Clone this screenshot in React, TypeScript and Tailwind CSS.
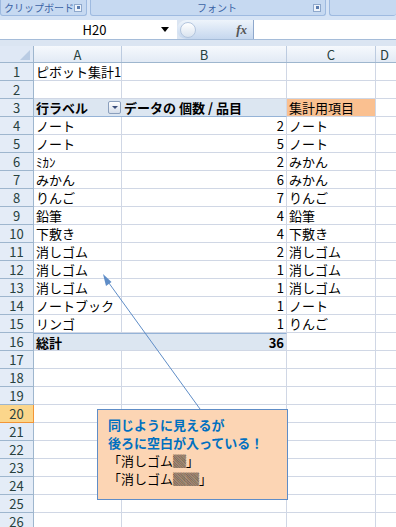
import React from "react";

type Row = {
  n: number;
  a?: string;
  b?: string;
  c?: string;
  kind?: "header" | "total";
};

const rows: Row[] = [
  { n: 1, a: "ピボット集計1" },
  { n: 2 },
  { n: 3, a: "行ラベル", b: "データの 個数 / 品目", c: "集計用項目", kind: "header" },
  { n: 4, a: "ノート", b: "2", c: "ノート" },
  { n: 5, a: "ノート", b: "5", c: "ノート" },
  { n: 6, a: "ﾐｶﾝ", b: "2", c: "みかん" },
  { n: 7, a: "みかん", b: "6", c: "みかん" },
  { n: 8, a: "りんご", b: "7", c: "りんご" },
  { n: 9, a: "鉛筆", b: "4", c: "鉛筆" },
  { n: 10, a: "下敷き", b: "4", c: "下敷き" },
  { n: 11, a: "消しゴム", b: "2", c: "消しゴム" },
  { n: 12, a: "消しゴム", b: "1", c: "消しゴム" },
  { n: 13, a: "消しゴム", b: "1", c: "消しゴム" },
  { n: 14, a: "ノートブック", b: "1", c: "ノート" },
  { n: 15, a: "リンゴ", b: "1", c: "りんご" },
  { n: 16, a: "総計", b: "36", kind: "total" },
  { n: 17 },
  { n: 18 },
  { n: 19 },
  { n: 20 },
  { n: 21 },
  { n: 22 },
  { n: 23 },
  { n: 24 },
  { n: 25 },
  { n: 26 },
];

const font = { fontFamily: "'Noto Sans CJK JP', 'Liberation Sans', sans-serif" };

function Launcher() {
  return (
    <span className="ml-auto mr-[4px] flex h-[8px] w-[8px] shrink-0 items-center justify-center border border-[#8ea8cc] bg-[#eef3fa]">
      <span className="h-[3px] w-[3px] bg-[#5b7cae]" />
    </span>
  );
}

function Ribbon() {
  return (
    <div className="flex h-[20px] bg-[#d5e3f5]">
      <div className="flex h-[16px] w-[87px] items-center whitespace-nowrap rounded-b-[3px] border border-t-0 border-[#9ebae0] bg-[#c6d9f1] pl-[3px] text-[10px] leading-none text-[#3b63a5]">
        クリップボード
        <Launcher />
      </div>
      <div className="ml-[3px] flex h-[16px] w-[236px] items-center whitespace-nowrap rounded-b-[3px] border border-t-0 border-[#9ebae0] bg-[#c6d9f1] text-[10px] leading-none text-[#3b63a5]">
        <span className="ml-[106px]">フォント</span>
        <Launcher />
      </div>
      <div className="ml-[3px] h-[16px] flex-1 rounded-b-[3px] border border-t-0 border-r-0 border-[#9ebae0] bg-[#c6d9f1]" />
    </div>
  );
}

function FormulaBar() {
  return (
    <div className="flex h-[26px] flex-col bg-[#dbe5f2]">
      <div className="flex h-[20px] border-b border-[#a5bcd9]">
        <div className="flex w-[177px] items-center bg-white">
          <span className="flex-1 pl-[28px] text-center text-[13px] leading-none text-black">H20</span>
          <span className="mr-[8px] h-0 w-0 border-x-[4px] border-t-[5px] border-x-transparent border-t-black" />
        </div>
        <div className="relative flex w-[77px] items-center rounded-l-[10px] border-r border-[#8ea8cc] bg-gradient-to-b from-[#eef4fb] to-[#c5d7ee]">
          <span className="ml-[3px] h-[16px] w-[16px] rounded-full border border-[#b4c6de] bg-gradient-to-b from-white to-[#d9e3ef]" />
          <span className="ml-auto mr-[6px] text-[13px] font-bold italic leading-none text-[#555]" style={{ fontFamily: "'Liberation Serif', serif" }}>
            fx
          </span>
        </div>
        <div className="flex-1 bg-white" />
      </div>
    </div>
  );
}

function ColumnHeader() {
  const cols = [
    { w: "w-[88px]", t: "A" },
    { w: "w-[165px]", t: "B" },
    { w: "w-[89px]", t: "C" },
  ];
  return (
    <div className="flex h-[17px] border-b border-[#9eb6ce] bg-gradient-to-b from-[#f6f9fd] to-[#e2eaf5] text-[13px] leading-none text-[#27413e]">
      <div className="relative w-[34px] border-r border-[#9eb6ce] bg-[#dfe8f5]">
        <span className="absolute bottom-[2px] right-[3px] h-0 w-0 border-b-[10px] border-l-[10px] border-b-[#b9cbe3] border-l-transparent" />
      </div>
      {cols.map((c) => (
        <div key={c.t} className={`${c.w} flex items-center justify-center border-r border-[#bccbe0]`}>
          {c.t}
        </div>
      ))}
      <div className="flex flex-1 items-center pl-[4px]">D</div>
    </div>
  );
}

function DataRow({ row }: { row: Row }) {
  const isHeader = row.kind === "header";
  const isTotal = row.kind === "total";
  const band = isHeader || isTotal ? "bg-[#dce6f1] font-bold" : "bg-white";
  const active = row.n === 20;
  const bottom = isHeader ? "border-b-[#95b3d7]" : "border-b-[#d0d7e5]";
  const top = isTotal ? "border-t border-t-[#95b3d7]" : "";

  return (
    <div className="flex h-[18px] text-[13px] leading-none text-black">
      <div
        className={`flex w-[34px] items-center justify-center border-r border-b text-[#27413e] ${
          active ? "border-[#f29536] bg-[#fbd68b]" : "border-[#9eb6ce] bg-[#e4ecf7]"
        }`}
      >
        {row.n}
      </div>
      <div className={`flex w-[88px] items-center border-b ${bottom} ${top} ${band} ${isHeader || isTotal ? "" : "border-r border-r-[#d0d7e5]"} pl-[2px] whitespace-nowrap`}>
        {row.a}
        {isHeader && (
          <span className="ml-auto mr-[1px] flex h-[13px] w-[13px] items-center justify-center rounded-[2px] border border-[#8a9fbd] bg-gradient-to-b from-white to-[#d5deeb]">
            <span className="h-0 w-0 border-x-[3px] border-t-[3px] border-x-transparent border-t-[#3b4f7a]" />
          </span>
        )}
      </div>
      <div
        className={`flex w-[165px] items-center border-b border-r border-r-[#d0d7e5] ${bottom} ${top} ${band} ${
          isHeader ? "justify-start pl-[2px]" : "justify-end pr-[2px]"
        } whitespace-nowrap`}
      >
        {row.b}
      </div>
      <div
        className={`flex w-[89px] items-center border-b border-r border-[#d0d7e5] pl-[2px] whitespace-nowrap ${
          isHeader ? "bg-[#fac090]" : "bg-white"
        }`}
      >
        {row.c}
      </div>
      <div className="flex-1 border-b border-[#d0d7e5] bg-white" />
    </div>
  );
}

export default function App() {
  return (
    <div className="relative h-[527px] w-[396px] overflow-hidden bg-white" style={font}>
      <Ribbon />
      <FormulaBar />
      <ColumnHeader />
      <div className="flex flex-col">
        {rows.map((row) => (
          <DataRow key={row.n} row={row} />
        ))}
      </div>

      <svg className="absolute left-0 top-0" width="396" height="527">
        <line x1="106" y1="279" x2="200" y2="409" stroke="#5f8dc7" strokeWidth="1" />
        <polygon points="103,274 106,286 111.5,282" fill="#5f8dc7" />
      </svg>

      <div className="absolute left-[97px] top-[409px] flex h-[91px] w-[191px] flex-col gap-[5px] border border-[#5f8dc7] bg-[#fcd5b4] pl-[10px] pt-[8px] text-[13px] leading-none">
        <span className="font-bold text-[#0070c0]">同じように見えるが</span>
        <span className="font-bold text-[#0070c0]">後ろに空白が入っている！</span>
        <span className="text-black">「消しゴム▓」</span>
        <span className="text-black">「消しゴム▓▓」</span>
      </div>
    </div>
  );
}
